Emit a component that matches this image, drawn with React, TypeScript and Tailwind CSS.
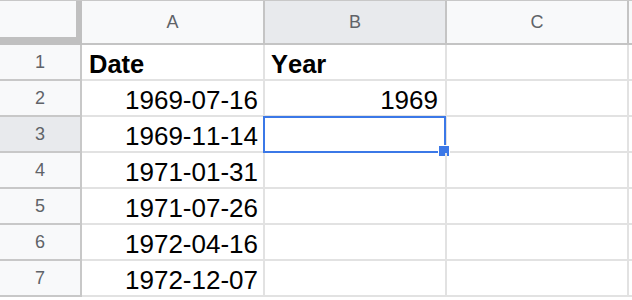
import React from "react";

const rows: [string, string][] = [
  ["Date", "Year"],
  ["1969-07-16", "1969"],
  ["1969-11-14", ""],
  ["1971-01-31", ""],
  ["1971-07-26", ""],
  ["1972-04-16", ""],
  ["1972-12-07", ""],
];

export default function App() {
  return (
    <div
      className="w-[632px] h-[300px] overflow-hidden bg-white [font-kerning:none]"
      style={{ fontFamily: '"Liberation Sans", Arial, sans-serif' }}
    >
      {/* header row */}
      <div className="flex h-[45px] border-t border-[#c8c8c8]">
        <div className="w-[82px] shrink-0 bg-[#f8f9fa] border-r-[6px] border-b-[8px] border-[#c0c0c0]" />
        <div className="w-[183px] shrink-0 flex items-center justify-center bg-[#f8f9fa] border-r-2 border-b-2 border-[#c4c4c4] text-[18px] leading-none text-[#5f6368]">
          A
        </div>
        <div className="w-[182px] shrink-0 flex items-center justify-center bg-[#e8eaed] border-r-2 border-b-2 border-[#c4c4c4] text-[18px] leading-none text-[#5f6368]">
          B
        </div>
        <div className="w-[182px] shrink-0 flex items-center justify-center bg-[#f8f9fa] border-r-2 border-b-2 border-[#c4c4c4] text-[18px] leading-none text-[#5f6368]">
          C
        </div>
        <div className="flex-1 bg-[#f8f9fa] border-b-2 border-[#c4c4c4]" />
      </div>
      {rows.map(([a, b], i) => {
        const header = i === 0;
        const selectedRow = i === 2;
        return (
          <div key={i} className="flex h-[36px]">
            <div
              className={
                selectedRow
                  ? "w-[82px] shrink-0 flex items-center justify-center bg-[#e8eaed] border-r-2 border-b-2 border-[#c8c8c8] text-[18px] leading-none text-[#5f6368]"
                  : "w-[82px] shrink-0 flex items-center justify-center bg-[#f8f9fa] border-r-2 border-b-2 border-[#c8c8c8] text-[18px] leading-none text-[#5f6368]"
              }
            >
              {i + 1}
            </div>
            <div
              className={
                header
                  ? "w-[183px] shrink-0 flex items-end justify-start pl-[7px] border-r-2 border-b-2 border-[#e2e2e2] text-[25.5px] leading-[29px] font-bold text-black"
                  : "w-[183px] shrink-0 flex items-end justify-end pr-[5px] border-r-2 border-b-2 border-[#e2e2e2] text-[26px] leading-[29px] text-black"
              }
            >
              {a}
            </div>
            <div
              className={
                header
                  ? "relative w-[182px] shrink-0 flex items-end justify-start pl-[6px] border-r-2 border-b-2 border-[#e2e2e2] text-[25.5px] leading-[29px] font-bold text-black"
                  : "relative w-[182px] shrink-0 flex items-end justify-end pr-[7px] border-r-2 border-b-2 border-[#e2e2e2] text-[26px] leading-[29px] text-black"
              }
            >
              {b}
              {selectedRow && (
                <>
                  <div className="absolute left-[-2px] top-[-1px] w-[183px] h-[37px] border-2 border-[#3b78e7]" />
                  <div className="absolute left-[173px] top-[28px] w-[12px] h-[12px] bg-[#3b78e7] border border-white" />
                </>
              )}
            </div>
            <div className="w-[182px] shrink-0 border-r-2 border-b-2 border-[#e2e2e2]" />
            <div className="flex-1 border-b-2 border-[#e2e2e2]" />
          </div>
        );
      })}
    </div>
  );
}
